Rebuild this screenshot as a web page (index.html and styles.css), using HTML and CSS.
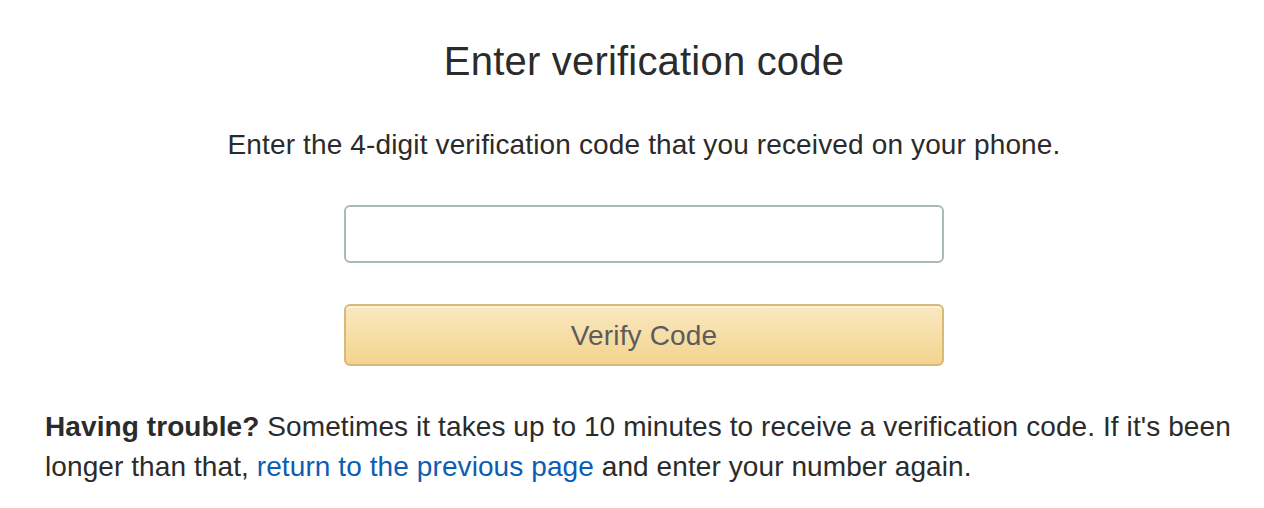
FILE: index.html
```html
<!DOCTYPE html>
<html lang="en">
<head>
<meta charset="utf-8">
<title>Enter verification code</title>
<link rel="stylesheet" href="styles.css">
</head>
<body>
<main class="page">
  <h1 class="title">Enter verification code</h1>
  <p class="subtitle">Enter the 4-digit verification code that you received on your phone.</p>
  <form class="form">
    <input class="code-input" type="text" aria-label="Verification code">
    <button class="verify-btn" type="button">Verify Code</button>
  </form>
  <p class="help"><strong>Having trouble?</strong> Sometimes it takes up to 10 minutes to receive a verification code. If it's been longer than that, <a class="link" href="#">return to the previous page</a> and enter your number again.</p>
</main>
</body>
</html>
```

FILE: styles.css
```css
html, body {
  margin: 0;
  padding: 0;
  background: #ffffff;
}

body {
  font-family: "Liberation Sans", Arial, Helvetica, sans-serif;
  color: #222222;
}

.page {
  padding: 37px 21px 0 45px;
}

.title {
  margin: 0;
  font-size: 40px;
  line-height: 48px;
  font-weight: normal;
  letter-spacing: 0.2px;
  text-align: center;
  color: #2b2b2b;
}

.subtitle {
  margin: 40px 0 0;
  font-size: 28px;
  line-height: 40px;
  letter-spacing: 0.14px;
  text-align: center;
  color: #2b2b2b;
}

.form {
  display: flex;
  flex-direction: column;
  align-items: center;
  gap: 41px;
  margin-top: 40px;
}

.code-input {
  box-sizing: border-box;
  width: 600px;
  height: 58px;
  border: 2px solid #aab8b8;
  border-radius: 6px;
  background: #ffffff;
  font-family: inherit;
  font-size: 28px;
  padding: 0 14px;
  outline: none;
}

.verify-btn {
  box-sizing: border-box;
  width: 600px;
  height: 62px;
  border: 2px solid #d8ba76;
  border-radius: 6px;
  background: linear-gradient(to bottom, #f9e8c0, #f3d48e);
  box-shadow: inset 0 2px 0 rgba(255, 255, 255, 0.45);
  font-family: inherit;
  font-size: 28px;
  letter-spacing: 0.14px;
  color: #5c5c5c;
  padding: 2px 0 0;
  cursor: default;
}

.help {
  margin: 41px 0 0;
  font-size: 28px;
  line-height: 40px;
  letter-spacing: 0.09px;
  color: #2b2b2b;
}

.help strong {
  font-weight: bold;
}

.link {
  color: #0b5db3;
  text-decoration: none;
}
```
